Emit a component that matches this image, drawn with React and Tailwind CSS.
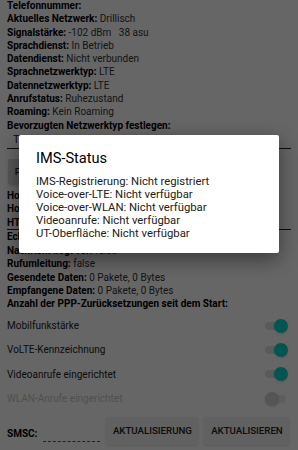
import React from "react"

const infoTop = [
  ["Telefonnummer:", ""],
  ["Aktuelles Netzwerk:", "Drillisch"],
  ["Signalstärke:", "-102 dBm   38 asu"],
  ["Sprachdienst:", "In Betrieb"],
  ["Datendienst:", "Nicht verbunden"],
  ["Sprachnetzwerktyp:", "LTE"],
  ["Datennetzwerktyp:", "LTE"],
  ["Anrufstatus:", "Ruhezustand"],
  ["Roaming:", "Kein Roaming"],
  ["Bevorzugten Netzwerktyp festlegen:", ""],
]

const infoBottom = [
  ["Nachricht liegt vor:", "false"],
  ["Rufumleitung:", "false"],
  ["Gesendete Daten:", "0 Pakete, 0 Bytes"],
  ["Empfangene Daten:", "0 Pakete, 0 Bytes"],
  ["Anzahl der PPP-Zurücksetzungen seit dem Start:", ""],
]

const switches = [
  { label: "Mobilfunkstärke", on: true },
  { label: "VoLTE-Kennzeichnung", on: true },
  { label: "Videoanrufe eingerichtet", on: true },
  { label: "WLAN-Anrufe eingerichtet", on: false, disabled: true },
]

const imsLines = [
  "IMS-Registrierung: Nicht registriert",
  "Voice-over-LTE: Nicht verfügbar",
  "Voice-over-WLAN: Nicht verfügbar",
  "Videoanrufe: Nicht verfügbar",
  "UT-Oberfläche: Nicht verfügbar",
]

const Line = ({ label, value }) => (
  <div className="whitespace-nowrap overflow-hidden">
    <span className="font-bold text-black">{label}</span>
    {value && <span className="whitespace-pre text-[#333]"> {value}</span>}
  </div>
)

const Toggle = ({ on, disabled }) => (
  <div className="relative w-[23px] h-[14px] flex items-center">
    <div
      className={`w-[21px] h-[8px] rounded-full ${
        disabled ? "bg-[#ececec]" : "bg-[#e0e0e0]"
      }`}
    />
    <div
      className={`absolute top-0 w-[14px] h-[14px] rounded-full shadow ${
        on ? "right-0 bg-[#03dac5]" : "left-0 bg-[#d4d4d4]"
      }`}
    />
  </div>
)

export default function App() {
  return (
    <div className="relative w-[298px] h-[450px] overflow-hidden bg-white font-['Roboto',sans-serif] text-[#212121]">
      <div className="px-[7px] text-[10px] leading-[13.3px] -mt-[1px]">
        {infoTop.map(([l, v]) => (
          <Line key={l} label={l} value={v} />
        ))}

        {/* spinner */}
        <div className="h-[17px] flex items-center px-[6px] border-b border-[#222] text-[11px] whitespace-nowrap">
          TD-SCDMA, LTE, CDMA, EvDo, GSM/WCDMA
        </div>

        <div className="mt-[10px] ml-[1px] w-[120px] h-[26px] bg-[#d6d7d7] rounded-[2px] shadow flex items-center justify-center text-[9.7px] font-medium">
          PING-TEST AUSFÜHREN
        </div>

        <div className="mt-[4px]">
          <Line label="Hostname(www.google.com) IPv4-Ping:" value="" />
          <Line label="Hostname(www.google.com) IPv6-Ping:" value="" />
          <div className="border-b border-[#222]">
            <Line label="HTTP-Client-Test:" value="" />
          </div>
          <Line label="Echtzeit-Mobilfunkinfo:" value="" />
        </div>

        <div className="mt-[1px]">
          {infoBottom.map(([l, v]) => (
            <Line key={l} label={l} value={v} />
          ))}
        </div>

        <div className="mt-[3px]">
          {switches.map((s) => (
            <div key={s.label} className="h-[24.3px] flex items-center justify-between pr-[3px]">
              <span className={s.disabled ? "text-[#c8c8c8]" : ""}>{s.label}</span>
              <Toggle on={s.on} disabled={s.disabled} />
            </div>
          ))}
        </div>

        <div className="mt-[6px] flex items-center">
          <span className="font-bold text-black mt-[6px]">SMSC:</span>
          <div className="ml-[6px] w-[57px] h-[14px] border-b border-dashed border-[#555] mt-[8px]" />
          <div className="ml-[6px] w-[92px] h-[28px] bg-[#f2f2f2] rounded-[2px] shadow flex items-center justify-center text-[9.7px] font-medium">
            AKTUALISIERUNG
          </div>
          <div className="ml-[6px] w-[85px] h-[28px] bg-[#f2f2f2] rounded-[2px] shadow flex items-center justify-center text-[9.7px] font-medium">
            AKTUALISIEREN
          </div>
        </div>
      </div>

      {/* scrim */}
      <div className="absolute inset-0 bg-black/60" />

      {/* dialog */}
      <div className="absolute left-[19px] top-[135px] w-[260px] h-[118px] bg-white rounded-[2px] shadow-[0_6px_20px_rgba(0,0,0,0.45)] px-[17px] pt-[13px] text-[#212121]">
        <div className="text-[14.6px] leading-[20px] text-black">IMS-Status</div>
        <div className="mt-[6.5px] text-[11.3px] leading-[13px]">
          {imsLines.map((t) => (
            <div key={t}>{t}</div>
          ))}
        </div>
      </div>
    </div>
  )
}
